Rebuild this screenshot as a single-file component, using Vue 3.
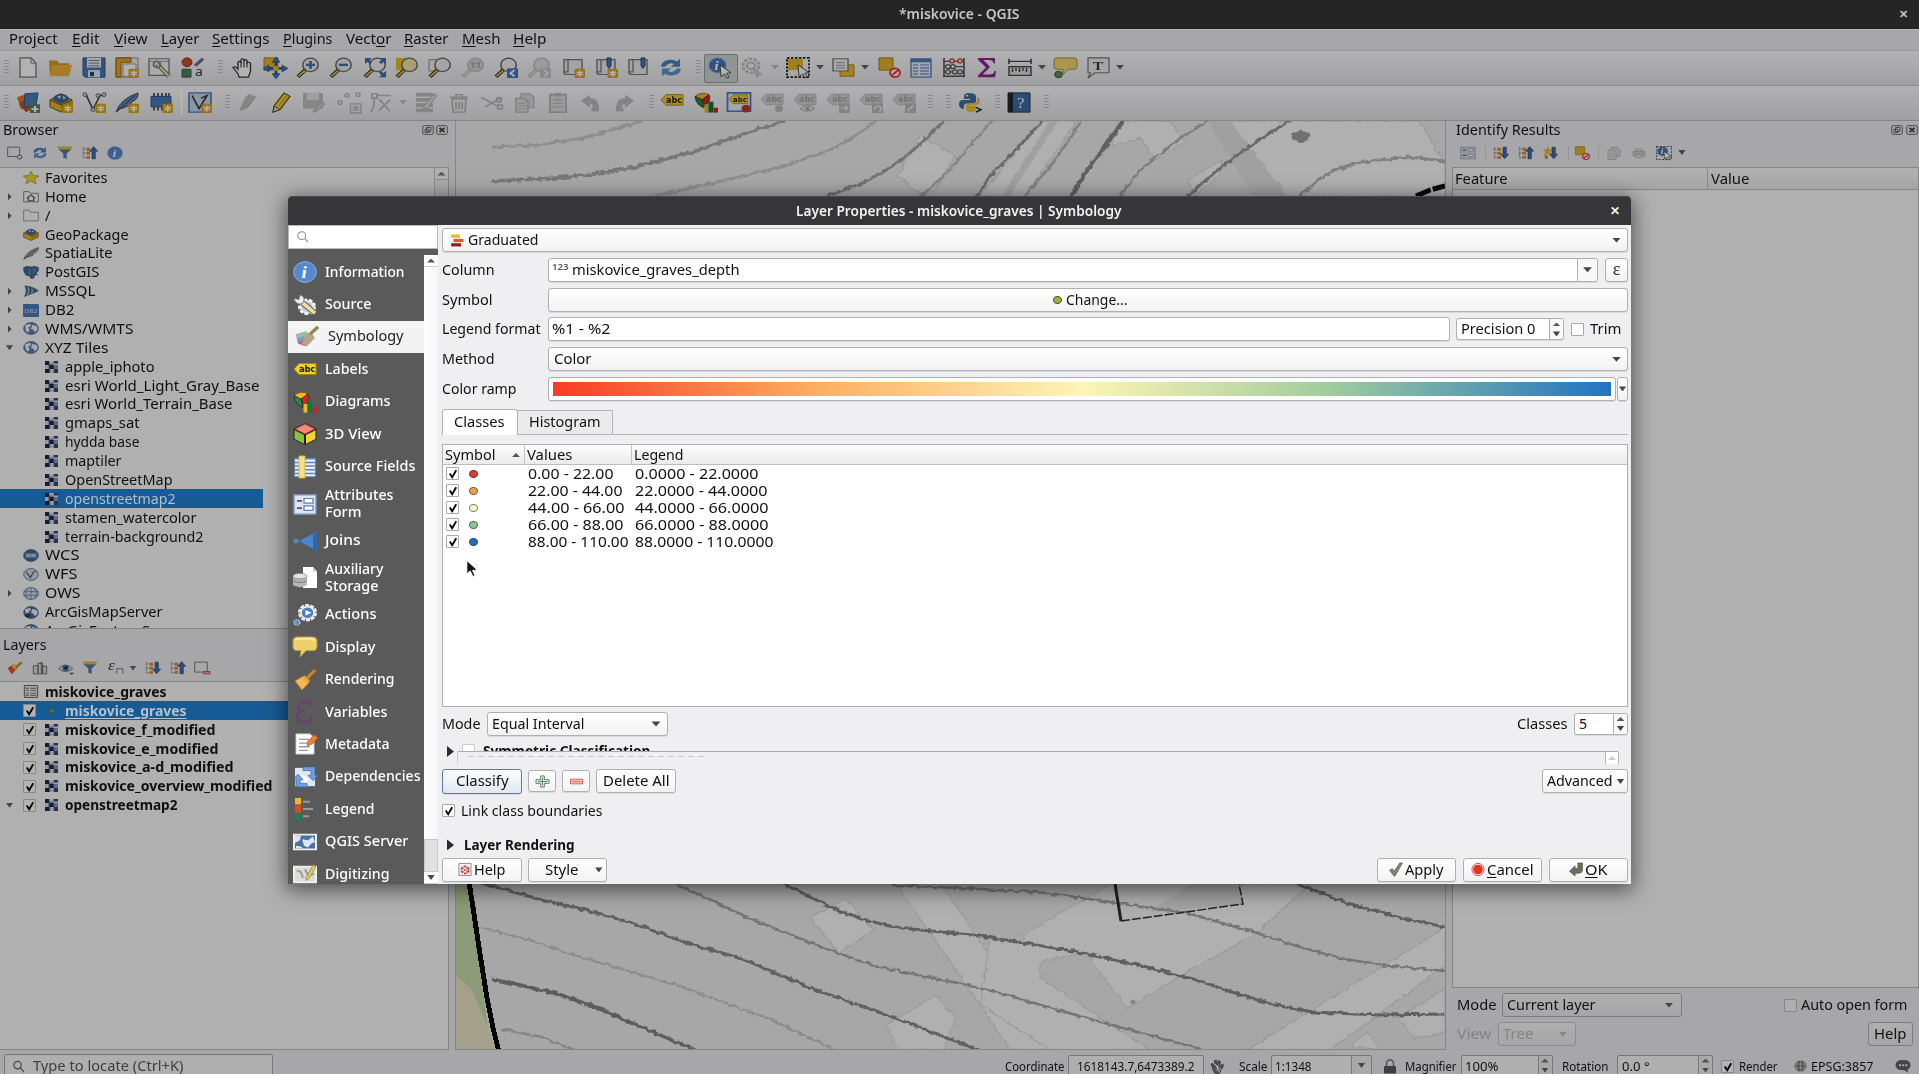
<script setup>
const vFit = {
  mounted(el, { value }) {
    if (!value) return
    const natural = el.getBoundingClientRect().width
    const wanted = value + 1.5
    el.style.transform = `scaleX(${wanted / natural})`
    el.style.marginRight = `${wanted - natural}px`
  },
}

const badge = '<rect x="13.500" y="13.500" width="10.500" height="10.500" rx="1.500" fill="#dca31c"/><path d="M18.800 15v7.500M15.500 17l6.600 3.600M22.100 17l-6.600 3.600" stroke="#fff" stroke-width="1.500"/>'
const lens = (fill, extra = '', c = '#666') => `<path d="M9.500 14.500L2 22.500" stroke="${c === '#666' ? '#333' : '#bdbdbd'}" stroke-width="4"/><path d="M9 15.500L2.500 22" stroke="${c === '#666' ? '#e8c33c' : '#ddd'}" stroke-width="2"/><circle cx="14.500" cy="9" r="7.700" fill="${fill}" stroke="${c}" stroke-width="1.500"/>${extra}`
const tag = (fill, ink) => `<path d="M1 12l5-6h17v12H6z" fill="${fill}" stroke="${ink === '#a5a5a5' ? '#bbb' : '#a08a10'}"/><text x="6" y="15.500" font-size="9.500" font-weight="700" font-family="DejaVu Sans, sans-serif" fill="${ink}" textLength="16" lengthAdjust="spacingAndGlyphs">abc</text>`
const offTag = (extra) => `<g transform="translate(0 -3.500)">${tag('#d4d4d4', '#a5a5a5')}</g>${extra}`
const book = (extra) => `<path d="M3 3h18v17H6q-3 0-3-2z" fill="#e9e9e9" stroke="#777" stroke-width="1.400"/><path d="M7 3v14H3" fill="none" stroke="#777" stroke-width="1.300"/>${extra}`
const globe = (fill, land) => `<circle cx="12" cy="12" r="11" fill="${fill}" stroke="#4c678c" stroke-width="1.300"/>${land}`
const lands = '<path d="M3 6l8-3 1 5-4 2 2 5-3 5-3-5zM14 5l7 3 1 6-4 5-3-5-3-1z" fill="#e7edf5"/>'
const grid3 = '<path d="M1 8.500h22M1 15.500h22M12 1v22M6 2.500q-4 9.500 0 19M18 2.500q4 9.500 0 19" fill="none" stroke="#5c7ea8" stroke-width="1.200"/>'
const info = '<circle cx="12" cy="12" r="11.300" fill="#5688cf" stroke="#8fb3e4"/><text x="8.500" y="19" font-size="19" font-style="italic" font-weight="700" font-family="Liberation Serif, serif" fill="#fff">i</text>'
const refresh = '<path d="M2 11Q3 3 12 3q4 0 6 2l3-3v9h-9l3-3q-5-3-9 3z" fill="#4a80c0"/><path d="M22 13q-1 8-10 8-4 0-6-2l-3 3v-9h9l-3 3q5 3 9-3z" fill="#5f93cf"/>'
const diag = '<path d="M1 5q6-6 14-2l-7 6z" fill="#f0b818" stroke="#5b4a10" stroke-width=".7"/><path d="M1 5l7 4 2 9Q2 15 1 5z" fill="#1f8a50" stroke="#123"  stroke-width=".7"/><path d="M8 9l7-6q3 5-4 14z" fill="#cc2a20" stroke="#411" stroke-width=".7"/><path d="M10.500 14h4v9.500h-4z" fill="#f0b818"/><path d="M14.500 11h5v12.500h-5z" fill="#127346"/><path d="M19.500 18H24v5.500h-4.500z" fill="#c22"/>'
const box = '<path d="M1 9l11-7 11 7v8l-11 6-11-6z" fill="#e5b92e" stroke="#5c4708"/><path d="M12 15l11-6v8l-11 6z" fill="#c99812"/><path d="M4 9a8 7 0 0 1 16 0l-8 5z" fill="#3e6698"/><path d="M8 5l4-1-1 4zM14 4l3 3-3 1z" fill="#dce6f2"/><path d="M1 9l11 6 11-6" fill="none" stroke="#5c4708"/>'
const feather = (c) => `<path d="M1 23Q5 8 23 1q1 7-6 10l-2 4-6 3-4 1z" fill="${c}" stroke="#444"/><path d="M2 22Q10 14 20 4" fill="none" stroke="#333"/>`
const funnel = '<path d="M2 5h20l-7.500 8v9l-5-2v-7z" fill="#4f78ad"/><path d="M1 1h22l-2 5H3z" fill="#e3b93a"/>'
const tree = '<path d="M2 2v18M2 5h7M2 12h7M2 20h7" stroke="#888" stroke-width="1.500" stroke-dasharray="3 1"/><path d="M7 3h5v5H7zM7 10h5v5H7zM7 17h5v5H7z" fill="#e08a2c"/>'
const up = '<path d="M17.500 1l6 8h-3.500v13h-5V9h-3.500z" fill="#3f6da8" stroke="#284a78"/>'
const down = '<path d="M17.500 22l6-8h-3.500V2h-5v12h-3.500z" fill="#3f6da8" stroke="#284a78"/>'
const noSel = '<path d="M2 1h14v14H2z" fill="#e3b52a" stroke="#a57f10"/><circle cx="18" cy="18" r="5" fill="#fbecec" stroke="#d33" stroke-width="1.800"/><path d="M14.800 21l6.500-6" stroke="#d33" stroke-width="1.800"/>'
const arrowCur = '<path d="M12 9l11 9-4.500.6 2.500 4.400-2.200 1-2.300-4.500-3.500 3z" fill="#fff" stroke="#444"/>'

const ic = {
  fnew: '<path d="M4 1h11l5 6v16H4z" fill="#fff" stroke="#777" stroke-width="1.300"/><path d="M15 1v6h5" fill="none" stroke="#777"/>',
  open: '<path d="M1 4h8l2 3h10v14H2z" fill="#d69a24"/><path d="M4 9h20l-3 13H2z" fill="#edb13c"/>',
  save: '<path d="M1 1h22v22H3l-2-2z" fill="#4876b5" stroke="#2f5285"/><path d="M5 1h14v11H5z" fill="#f2f2f2"/><path d="M6.500 4h11M6.500 7h11M6.500 10h11" stroke="#777"/><path d="M6 15h12v8H6z" fill="#dfe7f2"/><path d="M8 17h4v5H8z" fill="#345"/>',
  layout: '<path d="M1 1h22v22H1z" fill="#eee" stroke="#888"/><path d="M1 1h15v5H6v17H1z" fill="#e5a724" stroke="#8f6207"/><path d="M8 8h13v14H8z" fill="#fff" stroke="#999"/>' + badge,
  wrench: '<path d="M1 2h20v19H1z" fill="#f4f4f4" stroke="#777" stroke-width="1.300"/><path d="M1 5h20" stroke="#999"/><path d="M9 8l12 14" stroke="#666" stroke-width="4.500"/><path d="M9 8l12 14" stroke="#ece5a5" stroke-width="2.400"/><circle cx="9" cy="8.500" r="3.500" fill="none" stroke="#888" stroke-width="2"/>',
  style: '<circle cx="6" cy="6" r="5" fill="#c94f2e" stroke="#8a3018"/><path d="M14 10L22 2" stroke="#66708f" stroke-width="3.500"/><path d="M1 14h9v9H1z" fill="#4a8560" stroke="#2c5c3e"/><text x="14" y="22" font-size="14" font-family="Noto Sans, sans-serif" fill="#333">a</text>',
  hand: '<path d="M8 23l-1-4-5-7q2-2 5 2V6q1.500-2 3 0V3q1.500-2 3 0v1q1.500-2 3 0v3q1.500-2 3.500 0v9l-2 7z" fill="#fff" stroke="#333" stroke-width="1.300"/><path d="M10 5v7M13 4v8M16 5v7" stroke="#444" stroke-width="1.200"/>',
  pan: '<path d="M1 1h14v14H1z" fill="#e5b62e" stroke="#a57f10"/><path d="M13 3v20M3 13h20" stroke="#2f5c94" stroke-width="3"/><path d="M13 0l4 6H9zM13 25l4-6H9zM0 13l6-4v8zM25 13l-6-4v8z" fill="#3f72b2" stroke="#234a7c" stroke-width=".6"/><circle cx="13" cy="13" r="3" fill="#e5b62e"/>',
  zin: lens('#e9e9e9', '<path d="M14.500 4.500v9M10 9h9" stroke="#4571ac" stroke-width="2.800"/>'),
  zout: lens('#e9e9e9', '<path d="M10 9h9" stroke="#4571ac" stroke-width="2.800"/>'),
  zfull: lens('#eee') + '<path d="M2 1h7L2 8zM23 1v7l-7-7zM23 23h-7l7-7z" fill="#3f6da8"/><path d="M3 2l5 5M22 2l-5 5M22 22l-5-5" stroke="#3f6da8" stroke-width="3"/>',
  zsel: '<path d="M1 1h11v14H1z" fill="#e8bc26"/>' + lens('#efe7a5'),
  zlay: '<path d="M1 3h11v13H1z" fill="#eee" stroke="#888"/>' + lens('#ececec'),
  zone: lens('#d6d6d6', '<text x="8.500" y="13" font-size="10" font-weight="700" font-family="Noto Sans, sans-serif" fill="#a5a5a5" textLength="12">1:1</text>', '#bdbdbd'),
  zprev: lens('#eee') + '<path d="M13 13h11v11H13z" fill="#4876b5"/><path d="M20.500 15l-4 3.500 4 3.500" fill="none" stroke="#fff" stroke-width="2"/>',
  znext: lens('#ddd', '', '#bdbdbd') + '<path d="M13 13h11v11H13z" fill="#c4c4c4"/><path d="M17 15l4 3.500-4 3.500" fill="none" stroke="#eee" stroke-width="2"/>',
  bm1: book(badge), bm2: book('<path d="M13 1h4v9l-2 3-2-3z" fill="#4876b5" stroke="#26466f"/>' + badge), bm3: book('<path d="M15 1h4v9l-2 3-2-3z" fill="#4876b5" stroke="#26466f"/>'),
  refresh, info, box, funnel,
  ident: '<circle cx="9.500" cy="9.500" r="8.500" fill="#4876b5" stroke="#7ea0d0"/><text x="6.500" y="15" font-size="15" font-style="italic" font-weight="700" font-family="Liberation Serif, serif" fill="#fff">i</text>' + arrowCur,
  identsel: '<path d="M1 1h22v22H1z" fill="none" stroke="#555" stroke-width="1.600" stroke-dasharray="3 2"/><circle cx="10" cy="9" r="8" fill="#4876b5"/><text x="7" y="14" font-size="14" font-style="italic" font-weight="700" font-family="Liberation Serif, serif" fill="#fff">i</text>' + arrowCur,
  action: '<circle cx="11" cy="10" r="8" fill="none" stroke="#bfbfbf" stroke-width="3" stroke-dasharray="3.500 1.500"/><circle cx="11" cy="10" r="4" fill="none" stroke="#bfbfbf" stroke-width="2"/><path d="M13 12l9 8-4 1-1 3z" fill="#ccc" stroke="#bbb"/>',
  select: '<path d="M2 2h15v13H2z" fill="#e5b62e"/><path d="M1 1h22v22H1z" fill="none" stroke="#222" stroke-width="1.800" stroke-dasharray="2.500 1.500"/>' + arrowCur,
  layers2: '<path d="M9 9h14v13H9z" fill="#e9bc2c" stroke="#a8800c"/><path d="M2 2h15v14H2z" fill="#eee" stroke="#777" stroke-width="1.400"/><path d="M5 6.500h9M5 9.500h9M5 12.500h9" stroke="#999"/>',
  desel: noSel,
  table: '<path d="M2 2h20v21H2z" fill="#e6edf8" stroke="#5b80b8" stroke-width="1.400"/><path d="M2 2h20v4H2z" fill="#4f79b8"/><path d="M4 9h5M11 9h9M4 12.500h5M11 12.500h9M4 16h5M11 16h9M4 19.500h5M11 19.500h9" stroke="#7a9bcc" stroke-width="1.600"/>',
  abacus: '<path d="M2 1v22M22 1v22M1 22h22M2 5h20M2 11h20M2 17h20" stroke="#555" stroke-width="1.600" fill="none"/><g fill="#f5dede" stroke="#c03a3a" stroke-width="1.300"><circle cx="10" cy="4.500" r="2.300"/><circle cx="18" cy="4.500" r="2.300"/></g><g fill="#eee" stroke="#555" stroke-width="1.300"><circle cx="6" cy="11" r="2.300"/><circle cx="11" cy="11" r="2.300"/><circle cx="6" cy="17" r="2.300"/><circle cx="13" cy="17" r="2.300"/><circle cx="18" cy="17" r="2.300"/></g>',
  sigma: '<path d="M3 1h17v6h-1.500Q18 3.500 14 3.500H8.500l6.500 8-7.500 8.500H15q4 0 4.500-4H21l-1 7H3v-2l8-9-8-9z" fill="#8d2390"/>',
  ruler: '<path d="M1 5h22M1 2v6M23 2v6" stroke="#444" stroke-width="1.600"/><path d="M1 11h22v10H1z" fill="#ddd" stroke="#444" stroke-width="1.400"/><path d="M4.500 12v5M8 12v4M11.500 12v5M15 12v4M18.500 12v5" stroke="#444" stroke-width="1.400"/>',
  tip: '<path d="M4 1h17q3 0 3 3v7q0 3-3 3h-6l-5 6v-6H4q-3 0-3-3V4q0-3 3-3z" fill="#eed873" stroke="#a48d2a"/><circle cx="5.500" cy="20" r="3.800" fill="#5f8f62" stroke="#345d38"/>',
  annot: '<path d="M2 1h21v17H9l-7 6 2.500-6H2z" fill="#ededed" stroke="#777" stroke-width="1.200"/><text x="7" y="15" font-size="15" font-weight="700" font-family="Liberation Serif, serif" fill="#333">T</text>',
  dsm: '<path d="M1 6l10-4 5 14-11 4z" fill="#d87a28"/><path d="M3 14l9-9 8 12-10 6z" fill="#c5502a"/><path d="M9 2l13-1-2 15-12 1z" fill="#4a7dbe" stroke="#2c5288"/><path d="M14 14h10v10H14z" fill="#5d7b62"/><path d="M19 16v7M15.500 19.500h7" stroke="#fff" stroke-width="2"/>',
  gpkg: box + badge, vnew: '<path d="M4 3l7 17L18 4h5" fill="none" stroke="#444" stroke-width="1.600"/><g fill="#eee" stroke="#444"><circle cx="3" cy="3" r="2"/><circle cx="11" cy="20" r="2"/><circle cx="16" cy="4" r="2"/><circle cx="22" cy="3" r="2"/></g>' + badge,
  feath: feather('#5f89bd') + badge,
  chip: '<path d="M2 5h20v12H2z" fill="#4a7ab8" stroke="#2d5286"/><path d="M5 1v4M9 1v4M13 1v4M17 1v4M20 1v4M5 17v4M9 17v4M13 17v4" stroke="#333" stroke-width="1.500"/>' + badge,
  mesh: '<path d="M1 1h22v22H1z" fill="#c7d8ee" stroke="#4c78b2" stroke-width="1.600"/><path d="M4 4l7 15L19 4l-6 3" fill="none" stroke="#333" stroke-width="1.600"/>' + badge,
  pens: '<path d="M3 22L9 6l4-4 4 2 4 1-9 13z" fill="#c2c2c2"/><path d="M5 20L14 5M9 20l9-14" stroke="#aaa"/>',
  pencil: '<path d="M5 16L15 1l6 4-10 15-7 3z" fill="#f2cf39" stroke="#5d4c08" stroke-width="1.200"/><path d="M5 16l6 4-7 3z" fill="#e9d9b0" stroke="#444"/><path d="M10 16L18 4" stroke="#a88a12"/>',
  saveg: '<path d="M1 1h20v18H1z" fill="#c0c0c0"/><path d="M5 1h12v8H5z" fill="#e4e4e4"/><path d="M12 20l8-9 3 3-8 8-4 1z" fill="#ccc" stroke="#aaa"/>',
  dots: '<g fill="none" stroke="#bbb" stroke-width="1.500"><circle cx="10" cy="4" r="2"/><circle cx="21" cy="3" r="2"/><circle cx="3" cy="12" r="2"/><path d="M13.500 13.500H24V24H13.500zM18.700 15v7M15.500 17l6.500 4M22 17l-6.500 4"/></g>',
  vert: '<path d="M3 2h5v5H3zM8 4h14M5 7Q6 16 2 23M10 8l11 14M21 9L10 21" fill="none" stroke="#bbb" stroke-width="1.800"/>',
  multi: '<path d="M2 3h17M2 9h17M2 15h17M2 21h17" stroke="#bdbdbd" stroke-width="4.500"/><path d="M9 18L20 2l3 2-10 15z" fill="#ddd" stroke="#aaa"/>',
  trash: '<path d="M3 6h18M9 6V3h6v3M5 8h14l-1 15H6zM9 11v9M12 11v9M15 11v9" fill="none" stroke="#b5b5b5" stroke-width="1.700"/>',
  cut: '<path d="M1 6l18 11M5 17L22 6" stroke="#bbb" stroke-width="2"/><circle cx="20" cy="17" r="2.600" fill="none" stroke="#bbb" stroke-width="1.800"/><circle cx="19" cy="9" r="2.600" fill="none" stroke="#bbb" stroke-width="1.800"/>',
  copy: '<path d="M8 2h9l4 4v12H8z" fill="#d9d9d9" stroke="#bbb" stroke-width="1.400"/><path d="M3 7h8l4 4v12H3z" fill="#ddd" stroke="#b5b5b5" stroke-width="1.400"/><path d="M5 13h7M5 16h8M5 19h8" stroke="#bbb"/>',
  paste: '<path d="M4 3h16v20H4z" fill="#ddd" stroke="#b5b5b5" stroke-width="1.800"/><path d="M9 1h6v4H9z" fill="#bbb"/><path d="M7 9h10M7 13h10M7 17h10" stroke="#bbb" stroke-width="1.300"/>',
  undo: '<path d="M2 10l9-7v4q10 0 9 15-8 1-8-1 4-8-1-7v4z" fill="#bdbdbd"/>',
  redo: '<path d="M22 10l-9-7v4Q3 7 4 22q8 1 8-1-4-8 1-7v4z" fill="#bdbdbd"/>',
  tag: tag('#f2cd2e', '#222'), tagup: '<g transform="translate(0 -3)">' + tag('#f2cd2e', '#222') + '</g>', diag,
  tag2: '<path d="M.500 1h23v21H.500z" fill="#e8eef8" stroke="#4a78c8" stroke-width="1.800"/><g transform="translate(1 -2) scale(.85)">' + tag('#f2cd2e', '#222') + '</g><circle cx="19" cy="19" r="4.500" fill="#c5302a"/>',
  t3: offTag('<circle cx="19" cy="19" r="4" fill="#bbb"/>'),
  t4: offTag('<path d="M7 19q7-7 15 0-8 6-15 0z" fill="#ddd" stroke="#aaa"/><circle cx="14.500" cy="19" r="2" fill="#aaa"/>'),
  t5: offTag('<path d="M13 13h11v11H13z" fill="#bbb"/><path d="M15 18.500h7M19 16l3 2.500-3 2.500" stroke="#eee" fill="none" stroke-width="1.500"/>'),
  t6: offTag('<path d="M13 13h11v11H13z" fill="#bbb"/><path d="M16 20a3 3 0 1 1 4 2" stroke="#eee" fill="none" stroke-width="1.500"/>'),
  t7: offTag('<path d="M13 13h11v11H13z" fill="#bbb"/><path d="M15.500 21.500l6-6" stroke="#eee" stroke-width="1.800"/>'),
  python: '<path d="M11 1Q6 1 6 5v3h6v1H4q-3 1-3 5t3 5h2v-3q0-3 3-3h6q3 0 3-3V5q0-4-7-4z" fill="#3f6f9f"/><path d="M13 23q5 0 5-4v-3h-6v-1h6q4-1 4-4.500T20 6h-1v4q0 3-3 3h-5q-3 0-3 3v3q0 4 5 4z" fill="#efc332"/><circle cx="9" cy="4" r="1" fill="#fff"/><path d="M18 17.500l5 2.700-5 2.700" fill="none" stroke="#224" stroke-width="1.600"/>',
  help: '<path d="M1 1h22v22H1z" fill="#3f6da8" stroke="#233"/><path d="M1 1h5v22H1z" fill="#1d2633"/><text x="10" y="18" font-size="17" font-family="Liberation Serif, serif" fill="#fff">?</text>',
  // panel buttons
  addsel: '<path d="M1 2h18v16H1z" fill="#eee" stroke="#777" stroke-width="1.500"/><circle cx="19" cy="19" r="3.500" fill="#dfe7df" stroke="#666" stroke-width="1.500"/>',
  collapse: tree + up, expand: tree + down,
  exnew: '<path d="M9 0l2 6 6 0-5 4 2 7-5-4-6 4 2-7-4-4h6z" fill="#eeb62c"/><path d="M4 16h5v6H4z" fill="#e08a2c"/>' + down,
  brush: '<path d="M1 12l8-6 5 8-7 9z" fill="#d9542b"/><path d="M6 8l5-3 6 7-4 4z" fill="#eec441"/><path d="M13 11l9-9" stroke="#b98930" stroke-width="3.500"/>',
  addgrp: '<path d="M2 8h7v14H2zM9 4h7v18H9zM16 9h6v13h-6z" fill="#ddd" stroke="#666" stroke-width="1.500"/><path d="M14 1v20" stroke="#666" stroke-width="1.500"/>',
  eye: '<path d="M1 13q10-12 21 0-11 10-21 0z" fill="#eee" stroke="#666" stroke-width="1.500"/><circle cx="11.500" cy="12" r="5" fill="#3f6da8"/><circle cx="11.500" cy="12" r="2" fill="#112"/><path d="M17 20h7l-3.500 4z" fill="#555"/>',
  eps: '<text x="0" y="16" font-size="26" font-style="italic" font-family="Liberation Serif, serif" fill="#333">ε</text><path d="M13 22v-9h9v9" fill="none" stroke="#999" stroke-width="2"/>',
  remove: '<path d="M1 2h19v17H1z" fill="#eee" stroke="#777" stroke-width="1.500"/><path d="M14 18h10v4H14z" fill="#f0b0a8" stroke="#c33" stroke-width="1.300"/>',
  form: '<path d="M1 2h22v20H1z" fill="#d5dae2" stroke="#8490a3"/><path d="M4 7h5M4 16h5" stroke="#667" stroke-width="2"/><path d="M12 5h8v4h-8zM12 14h8v4h-8z" fill="#fff" stroke="#7d93b5"/>',
  print: '<path d="M3 9h18v8H3z" fill="#c8c8c8" stroke="#aaa"/><path d="M7 5h10v4H7zM7 15h10v5H7z" fill="#e5e5e5" stroke="#aaa"/>',
  // browser sources
  star: '<path d="M12 .500l3.500 8 8.500.6-6.500 5.600 2 8.800-7.500-4.800-7.500 4.800 2-8.800L0 9.100l8.500-.6z" fill="#e9cf38" stroke="#8f7d18"/>',
  home: '<path d="M1 3h8l2 3h12v16H1z" fill="none" stroke="#777" stroke-width="1.500"/><path d="M6 15l6-6 6 6M8 14v6h8v-6" fill="none" stroke="#555" stroke-width="1.800"/>',
  folder: '<path d="M1 2h8l2 4h12v16H1z" fill="none" stroke="#8a8a8a" stroke-width="1.400"/>',
  lite: feather('#9aa3ad'),
  pg: '<path d="M1 3Q6-1 12 2q6-3 11 1 2 6-4 11l3 2-5 1q0 7-4 6-3 0-3-6l-4 1Q0 12 1 3z" fill="#3f6996" stroke="#223a55"/><path d="M10 6v9M16 5q3 4-1 8" stroke="#9fb8d4" fill="none"/>',
  ms: '<path d="M2 1Q16 2 24 11 14 17 1 22 7 12 2 1z" fill="#46688f"/><path d="M7 4q4 7-1 15M13 7q3 5-1 9" fill="none" stroke="#cdd8e6" stroke-width="1.500"/>',
  db2: '<rect width="24" height="24" rx="2" fill="#4877b4"/><text x="2" y="16" font-size="10" textLength="20" lengthAdjust="spacingAndGlyphs" font-family="DejaVu Sans, sans-serif" fill="#c4d7ef">DB2</text>',
  wms: globe('#5b7ca6', lands), wcs: globe('#3f5f8a', '<g opacity=".9"><path d="M4 8h16v8H4z" fill="#c5d2e4"/></g>' + grid3), wfs: globe('#cdd4dd', '<path d="M5 7l6 11 5-11h4" fill="none" stroke="#555" stroke-width="1.800"/>'),
  ows: globe('#ccd6e3', grid3), arc: globe('#46688f', lands + '<circle cx="7" cy="17" r="4" fill="#29415f"/>'),
  xyz: '<path d="M0 0h24v24H0z" fill="#8794ae"/><path d="M0 0h8v8H0zM8 8h8v8H8zM0 16h8v8H0z" fill="#20263f"/><path d="M16 0h8v8h-8zM8 0h8v5H8z" fill="#dde"/><path d="M16 0h8v5h-8zM16 16h8v8h-8z" fill="#39456e"/><path d="M0 8h6v8H0zM10 16h6v8h-6z" fill="#cfd5e6"/>',
  attr: '<path d="M2 1h20v22H2z" fill="#e5e5e5" stroke="#555" stroke-width="1.500"/><path d="M4 6h5M11 6h9M4 10.500h5M11 10.500h9M4 15h5M11 15h9M4 19h5M11 19h9" stroke="#666" stroke-width="1.600"/>',
  dot: '<circle cx="12" cy="12" r="5" fill="#6f9e4a" stroke="#3b5a66"/>',
  // dialog pages
  src: '<circle cx="14" cy="14" r="7.500" fill="#dfe5ef" stroke="#f4f4f4" stroke-width="3" stroke-dasharray="3.500 1.800"/><circle cx="14" cy="14" r="5.500" fill="#b9c6dc"/><path d="M7 7l15 14" stroke="#66604a" stroke-width="6"/><path d="M8 8l14 13" stroke="#ecdf9c" stroke-width="4"/><path d="M1 5l5 1 1-5q4 1 4 5l-1 4-4 1Q2 10 1 5z" fill="#eee" stroke="#777" stroke-width=".8"/>',
  symb: '<path d="M1 9l10-3 7 8-8 8-7-3z" fill="#c95f74"/><path d="M1 9l10-3 3 3-11 5z" fill="#8fc4a4"/><path d="M2 14l11-5 2 3-12 6z" fill="#6da4d0"/><path d="M10 9l6-2 4 6-8 9-5-2z" fill="#b6a582"/><path d="M15 9l8-8" stroke="#8d8b4c" stroke-width="3.500"/>',
  cube: '<path d="M12 0l11.500 6v12L12 24 .500 18V6z" fill="#222"/><path d="M12 1l10 5.500-10 5.500L2 6.500z" fill="#f58b80" stroke="#b33"/><path d="M1.500 8L11 13v9.500L1.500 17.500z" fill="#86c440"/><path d="M22.500 8L13 13v9.500l9.500-5z" fill="#f2d233"/>',
  fields: '<path d="M1 2h22v21H1z" fill="#5c84bb"/><path d="M2 5h20M2 9h20M2 13h20M2 17h20M2 21h20" stroke="#e9f0fa" stroke-width="2.400"/><path d="M6 0h6v24H6z" fill="#f7df87" stroke="#d2b64e"/>',
  aform: '<path d="M1 2h22v21H1z" fill="#dbe5f3" stroke="#7b97c2" stroke-width="1.400"/><path d="M4 8.500h5M4 16.500h5" stroke="#555" stroke-width="2"/><path d="M11 6h9v5h-9zM11 14h9v5h-9z" fill="#fff" stroke="#5f82b5" stroke-width="1.300"/>',
  joins: '<circle cx="3" cy="12" r="2.700" fill="#4f86c6"/><path d="M6 12L24 2v21z" fill="#4a86cc"/><path d="M20 4l4-2v21l-4-2z" fill="#2f67ad"/>',
  aux: '<path d="M10 0h10l4 5v18H10z" fill="#fff"/><path d="M20 0v5h4" fill="#ccc"/><path d="M0 10v10q7 4 14 0V10z" fill="#b5b5b5"/><path d="M0 15q7 4 14 0" fill="none" stroke="#777"/><ellipse cx="7" cy="10" rx="7" ry="3" fill="#e3e3e3" stroke="#888" stroke-width=".8"/>',
  actions: '<circle cx="14.500" cy="9.500" r="7.800" fill="none" stroke="#ececec" stroke-width="3.500" stroke-dasharray="3.800 1.100"/><circle cx="14.500" cy="9.500" r="6.600" fill="#4b80c3" stroke="#e4e8f0" stroke-width="1.800"/><path d="M12.500 6.500l6 3-6 3z" fill="#fff"/><circle cx="4" cy="20" r="3" fill="#5b8ccb" stroke="#9cc" stroke-width="1.500" stroke-dasharray="2 1"/>',
  display: '<path d="M4 1h16q4 0 4 4v7q0 4-4 4h-7l-6 7 1-7H4q-4 0-4-4V5q0-4 4-4z" fill="#ecd06c" stroke="#b49a3c"/><path d="M3 5q0-2 3-2h13q2 0 2 3" stroke="#f8eab0" stroke-width="2" fill="none"/>',
  render: '<path d="M2 13l8-5 6 7-7 8z" fill="#f3b85e" stroke="#b87624"/><path d="M9 9l3-2 5 6-3 3z" fill="#e7a544"/><path d="M14 10l8-9" stroke="#d08420" stroke-width="3.200"/>',
  vars: '<path d="M18 5Q16 1 11 1 5 2 5 6t6 5Q4 12 4 17q1 6 8 6 6 0 7-6M18 5v-2" fill="none" stroke="#6d3b75" stroke-width="2.300"/>',
  meta: '<path d="M3 1h14l4 4v18H3z" fill="#fff" stroke="#ccc"/><path d="M6 7h10M6 11h11M6 15h11M6 19h9" stroke="#999" stroke-width="1.500"/><path d="M14 14l1-5 6-7 4 3-6 7z" fill="#f0803a" stroke="#b04a15" stroke-width=".7"/>',
  deps: '<path d="M2 2h20v20H2z" fill="#dfe7f3"/><path d="M10 1h12v9h3l-5 6-5-6h3V5h-8z" fill="#6f9fdd" stroke="#2f5f9f" stroke-width=".7"/><path d="M14 23H3v-8H0l5-6 5 6H7v4h7z" fill="#6f9fdd" stroke="#2f5f9f" stroke-width=".7"/><path d="M8 9l8 5-4 5z" fill="#fff"/>',
  legend: '<path d="M2 0h6v7H2z" fill="#f5b31f"/><path d="M2 8h6v8H2z" fill="#dd4d1c"/><path d="M2 17h6v7H2z" fill="#158251"/><path d="M10 4h7M10 12h10M10 20h6" stroke="#9a9a9a" stroke-width="2.200"/>',
  server: '<path d="M1 4h22v16H1z" fill="#49709f" stroke="#eee" stroke-width="2"/><path d="M2 5h6l-1 5-5 3zM9 9l6 1 5-4 2 6-4 2-3 4-4-2zM3 16l5 1 2 2H3z" fill="#dbe6f6"/>',
  digit: '<path d="M1 4h22v17H1z" fill="#dcdcd4" stroke="#efefef" stroke-width="2"/><path d="M4 8l4 2 2 6M12 7l3 6 6-1" stroke="#999" fill="none" stroke-width="2"/><path d="M13 16l7-14 3 2-7 13-3 2z" fill="#dfc46c" stroke="#917d3c" stroke-width=".7"/>',
  grad: '<path d="M2 1h15v6H2z" fill="#f6b12a"/><path d="M6 9h17v6H6z" fill="#e4572a"/><path d="M2 17h17v6H2z" fill="#8e1e16"/>',
  float: '<rect x="1.500" y="1.500" width="21" height="21" rx="3" fill="none" stroke="#444" stroke-width="2"/><path d="M9 6h9v9H9zM6 10h8v8H6z" fill="none" stroke="#444" stroke-width="2"/>',
  close: '<rect x="1.500" y="1.500" width="21" height="21" rx="3" fill="none" stroke="#444" stroke-width="2"/><path d="M7 7l10 10M17 7L7 17" stroke="#333" stroke-width="4"/>',
}

const spaced = (widths, base) => (list) => {
  let end = 0
  return list.map(([n, c]) => {
    const w = widths[n] || base
    const ml = c - w / 2 - end
    end = c + w / 2
    return { n, style: { marginLeft: ml + 'px' } }
  })
}
const place = spaced({ arr: 11, grip: 5, sep: 1 }, 24)
const placeSmall = spaced({ arr: 9, sep: 1 }, 16)
const bar1 = place([['grip', 6], ['fnew', 28], ['open', 60], ['save', 94], ['layout', 127], ['wrench', 160], ['style', 193], ['grip', 220], ['hand', 243], ['pan', 275], ['zin', 308], ['zout', 341], ['zfull', 375], ['zsel', 407], ['zlay', 440], ['zone', 473], ['zprev', 506], ['znext', 539], ['bm1', 573], ['bm2', 606], ['bm3', 638], ['refresh', 671], ['grip', 698], ['ident', 720], ['action', 752], ['arr', 775], ['select', 798], ['arr', 820], ['layers2', 843], ['arr', 865], ['desel', 889], ['table', 921], ['abacus', 954], ['sigma', 987], ['ruler', 1020], ['arr', 1042], ['tip', 1065], ['annot', 1098], ['arr', 1120]])
const bar2 = place([['grip', 6], ['dsm', 28], ['gpkg', 61], ['vnew', 94], ['feath', 127], ['chip', 161], ['sep', 181], ['mesh', 200], ['grip', 227], ['pens', 248], ['pencil', 281], ['saveg', 314], ['dots', 349], ['vert', 381], ['arr', 403], ['multi', 426], ['trash', 459], ['cut', 492], ['copy', 525], ['paste', 558], ['undo', 591], ['redo', 624], ['grip', 651], ['tagup', 672], ['diag', 706], ['tag2', 739], ['t3', 772], ['t4', 805], ['t5', 838], ['t6', 871], ['t7', 904], ['grip', 930], ['grip', 948], ['python', 970], ['grip', 997], ['help', 1019], ['grip', 1046]])
const barB = placeSmall([['addsel', 15], ['refresh', 40], ['funnel', 65], ['collapse', 90], ['info', 115]])
const barL = placeSmall([['brush', 15], ['addgrp', 40], ['eye', 66], ['funnel', 90], ['eps', 116], ['arr', 133], ['expand', 153], ['collapse', 178], ['remove', 202]])
const barI = placeSmall([['form', 18], ['sep', 35], ['expand', 51], ['collapse', 76], ['exnew', 100], ['sep', 118], ['desel', 132], ['sep', 148], ['copy', 164], ['print', 189], ['identsel', 214], ['arr', 232]])

// label pieces: before, mnemonic, after, width, x
const menus = [['Pro', 'j', 'ect', 47, 10], ['', 'E', 'dit', 26, 73], ['', 'V', 'iew', 32, 115], ['', 'L', 'ayer', 37, 162], ['', 'S', 'ettings', 56, 213], ['', 'P', 'lugins', 48, 284], ['Vect', 'o', 'r', 44, 347], ['', 'R', 'aster', 43, 405], ['', 'M', 'esh', 37, 463], ['', 'H', 'elp', 32, 514]]
  .map((m, i, a) => ({ m, style: { marginLeft: (i ? m[4] - a[i - 1][4] - a[i - 1][3] - 1.5 : m[4] - 1) + 'px' } }))

const browser = [
  ['Favorites', 'star', '', 0, 61], ['Home', 'home', 'r', 0, 40], ['/', 'folder', 'r', 0, 4], ['GeoPackage', 'box', '', 0, 82], ['SpatiaLite', 'lite', '', 0, 66], ['PostGIS', 'pg', '', 0, 53], ['MSSQL', 'ms', 'r', 0, 49], ['DB2', 'db2', 'r', 0, 28], ['WMS/WMTS', 'wms', 'r', 0, 87], ['XYZ Tiles', 'wms', 'd', 0, 62],
  ['apple_iphoto', 'xyz', '', 1, 88], ['esri World_Light_Gray_Base', 'xyz', '', 1, 193], ['esri World_Terrain_Base', 'xyz', '', 1, 166], ['gmaps_sat', 'xyz', '', 1, 73], ['hydda base', 'xyz', '', 1, 73], ['maptiler', 'xyz', '', 1, 55], ['OpenStreetMap', 'xyz', '', 1, 106], ['openstreetmap2', 'xyz', '', 1, 109, true], ['stamen_watercolor', 'xyz', '', 1, 130], ['terrain-background2', 'xyz', '', 1, 137],
  ['WCS', 'wcs', '', 0, 33], ['WFS', 'wfs', '', 0, 31], ['OWS', 'ows', 'r', 0, 34], ['ArcGisMapServer', 'arc', '', 0, 116], ['ArcGisFeatureServer', 'arc', '', 0, 140],
]
const layers = [['miskovice_graves', 'dot', 120, true], ['miskovice_f_modified', 'xyz', 149], ['miskovice_e_modified', 'xyz', 152], ['miskovice_a-d_modified', 'xyz', 167], ['miskovice_overview_modified', 'xyz', 206], ['openstreetmap2', 'xyz', 111]]

const pages = [
  ['info', [['Information', 78]]], ['src', [['Source', 45]]], ['symb', [['Symbology', 74]], true], ['tag', [['Labels', 42]]], ['diag', [['Diagrams', 64]]], ['cube', [['3D View', 55]]], ['fields', [['Source Fields', 89]]], ['aform', [['Attributes', 67], ['Form', 35]]], ['joins', [['Joins', 34]]], ['aux', [['Auxiliary', 57], ['Storage', 52]]], ['actions', [['Actions', 50]]], ['display', [['Display', 49]]], ['render', [['Rendering', 68]]], ['vars', [['Variables', 61]]], ['meta', [['Metadata', 63]]], ['deps', [['Dependencies', 94]]], ['legend', [['Legend', 48]]], ['server', [['QGIS Server', 82]]], ['digit', [['Digitizing', 63]]],
]
const classes = [['#dd3b33', '0.00 - 22.00', 84, '0.0000 - 22.0000', 122], ['#f0a04c', '22.00 - 44.00', 93, '22.0000 - 44.0000', 131], ['#fbf8c6', '44.00 - 66.00', 95, '44.0000 - 66.0000', 132], ['#93c493', '66.00 - 88.00', 94, '66.0000 - 88.0000', 132], ['#2b6cb8', '88.00 - 110.00', 99, '88.0000 - 110.0000', 137]]

// contour lines: [points, stroke, width]
const contours = [
  ['492,147 538,145 583,138 612,130 642,121', '#8d8d8d', 3], ['492,181 557,178 600,173 635,167 700,150 746,133 785,121', '#777', 3.5], ['655,196 726,180 778,168 830,150 855,136 876,121', '#8d8d8d', 3], ['827,196 860,184 882,173 905,157 925,140 944,121', '#727272', 3], ['921,196 940,180 954,165 975,140 992,121', '#858585', 2.5], ['977,196 990,176 1006,160 1025,140 1042,121', '#6b6b6b', 3], ['1025,196 1040,178 1055,160 1070,138 1081,121', '#808080', 2.5], ['1071,196 1084,175 1097,157 1112,137 1123,121', '#606060', 4], ['1120,196 1138,172 1156,157 1180,138 1208,121', '#7d7d7d', 2.5], ['1188,196 1215,172 1240,153 1265,136 1289,121', '#6b6b6b', 3], ['1299,196 1315,183 1331,172 1350,165 1370,161 1409,157 1445,161', '#808080', 3],
  ['478,882 542,900 590,911 638,925 690,944 740,958 816,990 893,1017 979,1050', '#616161', 3], ['481,928 530,940 574,955 676,985 772,1020 835,1050', '#8b8b8b', 2], ['491,979 520,985 561,995 595,1007 625,1020 695,1050', '#5c5c5c', 3.5], ['501,1029 542,1037 574,1050', '#858585', 2.5], ['676,884 700,895 746,917 816,945 874,966 957,983 1000,993 1047,1007 1130,1030 1200,1049', '#757575', 2.5], ['784,884 835,909 862,919 893,927 980,936 1073,951 1147,967 1193,979 1247,997 1280,1006 1313,1012 1380,1015 1445,1014', '#5f5f5f', 3], ['893,885 980,889 1047,893 1117,903 1150,908 1187,913 1257,933 1300,947 1340,958 1380,965 1445,971', '#747474', 2.5], ['1297,884 1347,903 1397,917 1445,927', '#5f5f5f', 3],
]
const fields = [
  '920,134 954,156 935,190 920,194 898,176', '1042,121 1077,121 1025,196 980,196', '1118,121 1170,121 1185,142 1156,160 1140,138 1112,146', '1222,121 1420,121 1445,165 1445,196 1272,196 1240,160', '1188,180 1222,160 1220,175 1195,195',
  '845,898 874,930 839,953 810,918', '936,995 955,1017 944,1050 899,1050 886,1025', '896,884 941,884 990,955 1035,1000 1150,1050 1010,1050 963,980', '1110,884 1310,884 1257,933 1187,972 1127,1009 1086,953 1024,944 1024,934 1087,898', '1247,1050 1445,928 1445,966 1330,1050', '1398,1018 1420,1005 1445,988 1445,1032 1415,1039', '1350,1046 1368,1032 1380,1050', '980,1004 1050,1050 1150,1050 1040,978 1040,962 1085,952 990,938',
]
</script>

<template>
  <div class="app">
    <header class="title"><span class="t" v-fit="119">*miskovice - QGIS</span><b class="x">✕</b></header>
    <nav class="menu"><span v-for="i in menus" :key="i.m[4]" class="cell" :style="i.style"><span class="t" v-fit="i.m[3]">{{ i.m[0] }}<u>{{ i.m[1] }}</u>{{ i.m[2] }}</span></span></nav>
    <div v-for="(bar, k) in [bar1, bar2]" :key="k" class="tools">
      <template v-for="(i, j) in bar" :key="j">
        <i v-if="['arr', 'grip', 'sep'].includes(i.n)" :class="[i.n, { faded: i.n === 'arr' && (k === 1 || j === 25) }]" :style="i.style"></i>
        <span v-else class="tool" :class="{ on: i.n === 'ident' }" :style="i.style"><svg viewBox="0 0 24 24" preserveAspectRatio="none" fill="none" v-html="ic[i.n]"></svg></span>
      </template>
    </div>

    <main class="main">
      <section class="left">
        <div class="phead"><span class="t" v-fit="54">Browser</span><svg class="pb" viewBox="0 0 24 24" preserveAspectRatio="none" v-html="ic.float"></svg><svg class="pb" viewBox="0 0 24 24" preserveAspectRatio="none" v-html="ic.close"></svg></div>
        <div class="ptools">
          <svg v-for="(i, j) in barB" :key="j" class="si" :style="i.style" viewBox="0 0 24 24" preserveAspectRatio="none" v-html="ic[i.n]"></svg>
        </div>
        <div class="tree browser">
          <div class="rows">
            <div v-for="r in browser" :key="r[0]" class="row" :class="{ child: r[3], sel: r[5] }">
              <span class="tw"><i v-if="r[2]" :class="r[2] === 'r' ? 'right' : 'arr sm'"></i></span>
              <svg class="ni" viewBox="0 0 24 24" preserveAspectRatio="none" v-html="ic[r[1]]"></svg>
              <span class="t" v-fit="r[4]">{{ r[0] }}</span>
            </div>
          </div>
          <div class="vsb"><span><i class="upa"></i></span></div>
        </div>
        <div class="split"></div>
        <div class="phead lay"><span class="t" v-fit="42">Layers</span></div>
        <div class="ptools lt">
          <template v-for="(i, j) in barL" :key="j">
            <i v-if="i.n === 'arr'" class="arr sm" :style="i.style"></i>
            <svg v-else class="si" :style="i.style" viewBox="0 0 24 24" preserveAspectRatio="none" v-html="ic[i.n]"></svg>
          </template>
        </div>
        <div class="tree layers">
          <div class="rows">
            <div class="row"><span class="tw"></span><svg class="ni" viewBox="0 0 24 24" preserveAspectRatio="none" v-html="ic.attr"></svg><span class="t" v-fit="120">miskovice_graves</span></div>
            <div v-for="r in layers" :key="r[1] + r[0]" class="row" :class="{ full: r[3] }">
              <span class="tw"><i v-if="r[0] === 'openstreetmap2'" class="arr sm"></i></span>
              <span class="cb"><svg viewBox="0 0 13 13"><path d="M3 6l2.600 4L10 2.500" /></svg></span>
              <svg class="ni nx" viewBox="0 0 24 24" preserveAspectRatio="none" v-html="ic[r[1]]"></svg>
              <span class="t" v-fit="r[2]">{{ r[0] }}</span>
            </div>
          </div>
        </div>
      </section>

      <section class="map">
        <svg viewBox="456 121 990 929" width="990" height="929">
          <defs><filter id="rough" x="-2%" y="-2%" width="104%" height="104%"><feTurbulence type="fractalNoise" baseFrequency=".18" numOctaves="2" seed="4" /><feDisplacementMap in="SourceGraphic" scale="5" xChannelSelector="R" yChannelSelector="G" /></filter></defs>
          <path d="M456 884h13l19 145-32-46z" fill="#8c9a78" /><path d="M456 975l16 15 16 37 9 25h-41z" fill="#a5a08c" />
          <g filter="url(#rough)"><polygon v-for="f in fields" :key="f" :points="f" fill="#b0b0b0" stroke="#999a9a" stroke-width="1.200" />
          <path d="M1208 121h22l58 75h-35z M1050 121h8l-48 75h-8z" fill="#a0a0a1" /></g>
          <path d="M1115 884l6 37 122-17-4-20z" fill="#adadad" /><path d="M1150 912l40-28h49l4 20z" fill="#a2a2a3" />
          <g fill="none" filter="url(#rough)"><polyline v-for="c in contours" :key="c[0]" :points="c[0]" :stroke="c[1]" :stroke-width="c[2]" /></g>
          <path d="M469 882l5 32 6 40 7 44 6 30 6 24" fill="none" stroke="#050505" stroke-width="5" shape-rendering="crispEdges" />
          <path d="M1115 884l6 37" stroke="#222" stroke-width="3" /><path d="M1121 921l122-17-4-20" fill="none" stroke="#222" stroke-width="1.500" stroke-dasharray="9 2" />
          <path d="M1416 196l14-6 15-4" fill="none" stroke="#080808" stroke-width="5" stroke-dasharray="16 2" />
          <ellipse cx="1301" cy="136" rx="9.500" ry="6" fill="#707070" filter="url(#rough)" /><circle cx="1133" cy="1002" r="2.500" fill="#858585" />
        </svg>
      </section>

      <section class="ident">
        <div class="phead"><span class="t" v-fit="103">Identify Results</span><svg class="pb" viewBox="0 0 24 24" preserveAspectRatio="none" v-html="ic.float"></svg><svg class="pb" viewBox="0 0 24 24" preserveAspectRatio="none" v-html="ic.close"></svg></div>
        <div class="ptools">
          <template v-for="(i, j) in barI" :key="j">
            <i v-if="i.n === 'arr'" class="arr sm" :style="i.style"></i><i v-else-if="i.n === 'sep'" class="sep" :style="i.style"></i>
            <svg v-else class="si" :style="i.style" viewBox="0 0 24 24" preserveAspectRatio="none" v-html="ic[i.n]"></svg>
          </template>
        </div>
        <div class="results"><div class="rh"><span class="c1"><span class="t" v-fit="51">Feature</span></span><span><span class="t" v-fit="37">Value</span></span></div></div>
        <div class="opt o1"><span class="t" v-fit="38">Mode</span><span class="combo dim m"><span class="t" v-fit="87">Current layer</span><i class="arr"></i></span><span class="cb e"></span><span class="t" v-fit="105">Auto open form</span></div>
        <div class="opt o2"><span class="t off" v-fit="33">View</span><span class="combo dim v"><span class="t off" v-fit="29">Tree</span><i class="arr faded"></i></span><span class="combo dim h"><span class="t" v-fit="31">Help</span></span></div>
      </section>
    </main>

    <footer class="status">
      <span class="loc"><svg viewBox="0 0 14 14"><circle cx="6" cy="5.500" r="4" /><path d="M9 8.500l4 4.500" /></svg><span class="t" v-fit="149">Type to locate (Ctrl+K)</span></span>
      <span class="t s" v-fit="58">Coordinate</span>
      <span class="fld co"><span class="t" v-fit="116">1618143.7,6473389.2</span></span>
      <svg class="ext" viewBox="0 0 24 24"><path d="M8 22L3 9l3-1 3 5-1-9 3-1 2 8 1-7 3 1-1 8 4-4 2 2-5 10-3 3z" fill="#555" stroke="#222" /><path d="M1 3l21 18M9 9l7 12M14 10l-2 9" stroke="#bbb" stroke-width="1.300" /></svg>
      <span class="t s" v-fit="27">Scale</span>
      <span class="fld sc"><span class="t" v-fit="35">1:1348</span><b><i class="arr sm"></i></b></span>
      <svg class="lock" viewBox="0 0 12 15"><path d="M2.500 7V5q0-4 3.500-4t3.500 4v2" fill="none" stroke="#555" stroke-width="1.500" /><rect x="0" y="7" width="12" height="7.500" rx="1" fill="#3f3f3f" /></svg>
      <span class="t s" v-fit="50">Magnifier</span>
      <span class="fld mg"><span class="t" v-fit="32">100%</span><b class="spin"><i class="upa"></i><i class="arr sm"></i></b></span>
      <span class="t s" v-fit="45">Rotation</span>
      <span class="fld ro"><span class="t" v-fit="26">0.0 °</span><b class="spin"><i class="upa"></i><i class="arr sm"></i></b></span>
      <span class="cb"><svg viewBox="0 0 13 13"><path d="M3 6l2.600 4L10 2.500" /></svg></span>
      <span class="t s" v-fit="37">Render</span>
      <svg class="gl" viewBox="0 0 24 24" preserveAspectRatio="none"><circle cx="12" cy="12" r="11" fill="#555" /><path d="M1 8h22M1 16h22M12 1v22M6 2.500q-4 9.500 0 19M18 2.500q4 9.500 0 19" fill="none" stroke="#999" stroke-width="1.200" /></svg>
      <span class="t s" v-fit="61">EPSG:3857</span>
      <svg class="msg" viewBox="0 0 16 14"><path d="M8 1q7.500 0 7.500 5.200 0 3-3 4.600l1 3-4-2.500Q.500 11.500.500 6.200.500 1 8 1z" fill="#454545" /><path d="M4 6.200h2M7.200 6.200h2M10.400 6.200h2" stroke="#aaa" stroke-width="2" /></svg>
    </footer>

    <div class="dialog">
      <div class="dt"><span class="t" v-fit="324">Layer Properties - miskovice_graves | Symbology</span><b class="x">✕</b></div>
      <div class="db">
        <aside class="side">
          <div class="search"><svg viewBox="0 0 14 14"><circle cx="5.500" cy="5.500" r="4.500" /><path d="M9 9l4 4" /></svg></div>
          <div class="sl">
            <div class="pages">
              <div v-for="p in pages" :key="p[0]" class="page" :class="{ cur: p[2], two: p[1].length > 1 }">
                <svg viewBox="0 0 24 24" preserveAspectRatio="none" v-html="ic[p[0]]"></svg>
                <span class="pl"><span v-for="l in p[1]" :key="l[0]" class="t" v-fit="l[1]">{{ l[0] }}</span></span>
              </div>
            </div>
            <div class="sb"><span><i class="upa"></i></span><em></em><span><i class="arr sm"></i></span></div>
          </div>
        </aside>

        <div class="form">
          <div class="combo grad"><svg viewBox="0 0 24 24" preserveAspectRatio="none" v-html="ic.grad"></svg><span class="t" v-fit="69">Graduated</span><i class="arr"></i></div>
          <div class="fr"><label><span class="t" v-fit="51">Column</span></label><div class="inp col"><span class="t n123" v-fit="15">123</span><span class="t" v-fit="166">miskovice_graves_depth</span><b><i class="arr"></i></b></div><div class="combo eb">ε</div></div>
          <div class="fr"><label><span class="t" v-fit="49">Symbol</span></label><div class="combo chg"><i class="pt"></i><span class="t" v-fit="60">Change...</span></div></div>
          <div class="fr fmt"><label><span class="t" v-fit="97">Legend format</span></label><div class="inp lf"><span class="t" v-fit="57">%1 - %2</span></div><div class="inp pr"><span class="t" v-fit="73">Precision 0</span><b class="spin"><i class="upa"></i><i class="arr sm"></i></b></div><span class="cb e"></span><span class="t" v-fit="30">Trim</span></div>
          <div class="fr"><label><span class="t" v-fit="51">Method</span></label><div class="combo mt"><span class="t" v-fit="36">Color</span><i class="arr"></i></div></div>
          <div class="fr ramp"><label><span class="t" v-fit="73">Color ramp</span></label><div class="inp rb"><div></div></div><div class="combo rd"><i class="arr sm"></i></div></div>
          <div class="tabs"><span class="tab a"><span class="t" v-fit="49">Classes</span></span><span class="tab"><span class="t" v-fit="70">Histogram</span></span><span class="rest"></span></div>
          <div class="table">
            <div class="th"><span><span class="t" v-fit="49">Symbol</span><i class="upa"></i></span><span><span class="t" v-fit="44">Values</span></span><span><span class="t" v-fit="48">Legend</span></span></div>
            <div v-for="c in classes" :key="c[0]" class="tr"><span class="c"><span class="cb"><svg viewBox="0 0 13 13"><path d="M3 6l2.600 4L10 2.500" /></svg></span><i class="cd" :style="{ background: c[0] }"></i></span><span><span class="t" v-fit="c[2]">{{ c[1] }}</span></span><span><span class="t" v-fit="c[4]">{{ c[3] }}</span></span></div>
            <svg class="cursor" viewBox="0 0 14 18"><path d="M1 0v14l3.500-3 3 6 2-1-2.500-5.500L12 10z" fill="#111" stroke="#fff" stroke-width=".8" /></svg>
          </div>
          <div class="mode"><span class="t" v-fit="37">Mode</span><div class="combo ei"><span class="t" v-fit="91">Equal Interval</span><i class="arr"></i></div><span class="t cl" v-fit="49">Classes</span><div class="inp five"><span class="t">5</span><b class="spin"><i class="upa"></i><i class="arr sm"></i></b></div></div>
          <div class="sym"><i class="big"></i><div class="clip"><span class="cb e"></span><span class="t" v-fit="166">Symmetric Classification</span></div><div class="edge"><em></em><span><i class="upa"></i></span></div></div>
          <div class="btns"><div class="combo cf"><span class="t" v-fit="51">Classify</span></div><div class="combo sq"><svg viewBox="0 0 16 14"><path d="M6 1h4v4h5v4h-5v4H6V9H1V5h5z" fill="#e6efe6" stroke="#567a60" /><path d="M8 3v8M3 7h10" stroke="#567a60" /></svg></div><div class="combo sq"><svg viewBox="0 0 16 14"><path d="M1.500 4.500h13v5h-13z" fill="#f7c9c2" stroke="#cf5a4c" /><path d="M3.500 7h9" stroke="#e08074" stroke-width="1.500" /></svg></div><div class="combo da"><span class="t" v-fit="65">Delete All</span></div><div class="combo ad"><span class="t" v-fit="64">Advanced</span><i class="arr sm"></i></div></div>
          <div class="link"><span class="cb"><svg viewBox="0 0 13 13"><path d="M3 6l2.600 4L10 2.500" /></svg></span><span class="t" v-fit="140">Link class boundaries</span></div>
          <div class="lr"><i class="big"></i><span class="t" v-fit="109">Layer Rendering</span></div>
          <div class="foot">
            <div class="combo"><svg viewBox="0 0 14 14"><path d="M.500.500h13v13H.500z" fill="#f3eeee" stroke="#888" /><circle cx="7" cy="7.500" r="3.800" fill="none" stroke="#c33" stroke-width="1.800" stroke-dasharray="3 1" /><path d="M4 5l6 5M10 5l-6 5" stroke="#b55" /></svg><span class="t" v-fit="30">Help</span></div>
            <div class="combo st"><span class="t" v-fit="32">Style</span><i class="arr sm"></i></div>
            <div class="combo ap"><svg viewBox="0 0 14 14"><path d="M0 8l3-2 2 3 6-9 3 0-8 14H5z" fill="#7e8277" stroke="#55584f" stroke-width=".7" /></svg><span class="t" v-fit="37">Apply</span></div>
            <div class="combo"><svg viewBox="0 0 14 14"><circle cx="7" cy="7" r="6.500" fill="#fff" stroke="#a44" /><circle cx="7" cy="7" r="5.200" fill="#e8301c" /></svg><span class="t" v-fit="45"><u>C</u>ancel</span></div>
            <div class="combo"><svg viewBox="0 0 14 14"><path d="M0 9l6-6v3h3V0h5v7q0 4-4 4H6v3z" fill="#6b6e60" stroke="#4b4e43" stroke-width=".7" /></svg><span class="t" v-fit="21"><u>O</u>K</span></div>
          </div>
        </div>
      </div>
    </div>
  </div>
</template>

<style>
html, body { margin: 0; background: #a8a7a9; overflow: hidden; }
</style>
<style scoped>
.app { position: relative; width: 1919px; height: 1074px; overflow: hidden; display: flex; flex-direction: column; background: #a7a6a8; color: #111; font: 14px/18px "Noto Sans", sans-serif; }
.app * { box-sizing: border-box; }
.t { display: inline-block; flex: none; white-space: pre; transform-origin: 0 50%; }
u { text-underline-offset: 2px; text-decoration-thickness: 1px; }
svg { flex: none; display: block; overflow: visible; }
i { flex: none; display: block; }
.title { flex: none; height: 29px; background: #252525; color: #c6c6c6; font-weight: 600; display: flex; align-items: center; padding: 0 0 1px 899px; }
.title .x { margin-left: auto; margin-right: 11px; font-size: 11px; }
.menu { flex: none; height: 22px; display: flex; align-items: center; border-top: 1px solid #b5b4b6; border-bottom: 1px solid #999; padding-bottom: 2px; }
.cell { flex: none; display: flex; }
.tools { flex: none; height: 35px; display: flex; align-items: center; background: linear-gradient(#b1b0b2, #a09fa1); border-bottom: 1px solid #868587; border-top: 1px solid #b5b4b6; padding-bottom: 3px; }
.tool { flex: none; width: 24px; height: 21px; filter: brightness(.7); }
.tool svg { width: 24px; height: 21px; }
.tool.on { position: relative; }
.tool.on::before { content: ""; position: absolute; left: -4px; top: -3px; width: 32px; height: 27px; background: #cfd3d4; border: 1px solid #9b9c9d; border-radius: 2px; }
.tool.on svg { position: relative; }
.arr { width: 11px; height: 5px; background: #454545; clip-path: polygon(10% 0, 90% 0, 50% 100%); }
.arr.sm { width: 9px; }
.arr.faded { background: #868587; }
.upa { width: 8px; height: 4px; background: #555; clip-path: polygon(50% 0, 100% 100%, 0 100%); }
.right { width: 4px; height: 8px; background: #3f3f3f; clip-path: polygon(0 0, 100% 50%, 0 100%); }
.grip { width: 5px; height: 16px; background: radial-gradient(circle, #858486 .8px, transparent 1px) 0 0/2.500px 3px; }
.sep { width: 1px; height: 14px; background: #969597; }
.tools .sep { height: 26px; background: #bbb; }
.main { flex: none; height: 929px; display: flex; }
.left { width: 449px; display: flex; flex-direction: column; }
.phead { height: 18px; flex: none; display: flex; align-items: center; padding: 0 1px 0 3px; gap: 2px; }
.pb { width: 12px; height: 10px; }
.phead .pb:nth-child(2) { margin-left: auto; }
.ptools { flex: none; height: 28px; display: flex; align-items: center; padding-bottom: 1px; }
.si { width: 16px; height: 14px; filter: brightness(.7); fill: none; }
.tree { background: #b0b0b0; border: 1px solid #858585; border-left: 0; display: flex; overflow: hidden; }
.rows { flex: 1; padding-top: .5px; min-width: 0; }
.browser { flex: none; height: 462px; }
.row { height: 18.880px; display: flex; align-items: center; color: #101010; }
.tw { width: 23px; flex: none; display: flex; justify-content: center; padding-right: 4px; }
.ni { width: 16px; height: 13px; margin-right: 6px; filter: brightness(.72); }
.child .tw { width: 45px; }
.child .ni, .ni.nx { width: 13px; height: 12px; margin-right: 7px; }
.sel { background: #165b95; width: 263px; color: #b7bfc9; }
.full { background: #165b95; color: #b7bfc9; }
.full .t { text-decoration: underline; text-underline-offset: 2px; }
.vsb { width: 14px; border-left: 1px solid #8b8b8b; background: #a9a9a9; }
.vsb span { height: 12px; display: flex; align-items: center; justify-content: center; border-bottom: 1px solid #8b8b8b; background: #b0b0b0; }
.split { flex: none; height: 6px; }
.lay { height: 20px; }
.lt { height: 26px; padding-bottom: 0; }
.layers { flex: 1; font-weight: 700; }
.cb { flex: none; width: 13px; height: 13px; border: 1px solid #888; background: #b4b4b4; border-radius: 1px; }
.cb svg { width: 12px; height: 12px; fill: none; stroke: #000; stroke-width: 2; }
.layers .cb { margin-right: 9px; }
.map { margin-left: 6px; width: 991px; height: 929px; border: 1px solid #858585; border-top: 0; background: #a7a7a8; overflow: hidden; }
.ident { margin-left: 6px; flex: 1; display: flex; flex-direction: column; }
.ident .phead { padding: 0 1px 0 4px; gap: 3px; }
.ident .ptools { margin-left: -2px; }
.results { flex: none; height: 821px; border: 1px solid #858585; background: #b0b0b0; }
.rh { height: 22px; display: flex; align-items: center; border-bottom: 1px solid #858585; background: linear-gradient(#b1b1b1, #a5a5a6); }
.rh > span { padding-left: 3px; display: flex; height: 21px; align-items: center; }
.rh > .c1 { width: 255px; padding-left: 2px; border-right: 1px solid #8b8b8b; }
.opt { display: flex; align-items: center; padding-left: 5px; height: 24px; }
.o1 { margin-top: 5px; }
.o2 { margin-top: 5px; }
.off { color: #848384; }
.combo { flex: none; height: 24px; border: 1px solid #b0afb1; border-radius: 3px; background: linear-gradient(#fff, #f2f2f3); display: flex; align-items: center; box-shadow: 0 1px 0 #d9d8da; }
.combo.dim { background: linear-gradient(#afafaf, #a6a5a7); border-color: #7d7c7e; box-shadow: none; }
.dim.m { margin-left: 5px; width: 180px; padding: 0 6px 0 4px; }
.combo > .arr:last-child { margin-left: auto; }
.opt .cb { margin-left: 102px; margin-right: 4px; background: #aeaeae; }
.dim.v { margin-left: 6px; width: 78px; padding: 0 6px 0 4px; border-color: #8c8b8d; }
.dim.h { margin-left: 292px; width: 45px; justify-content: center; }
.status { flex: none; height: 24px; display: flex; align-items: center; padding: 8px 0 0 4px; }
.status .t { font-size: 13px; }
.loc { flex: none; width: 269px; height: 24px; border: 1px solid #777; border-radius: 2px; background: #afafaf; display: flex; align-items: center; padding-left: 7px; color: #3f3f3f; gap: 8px; align-self: flex-start; margin-top: -4px; }
.status .loc .t { font-size: 14px; }
.loc svg { width: 13px; height: 13px; fill: none; stroke: #444; stroke-width: 1.200; }
.loc + .t { margin-left: 732px; }
.fld { flex: none; height: 24px; border: 1px solid #777; border-radius: 2px; background: #afafaf; display: flex; align-items: center; padding-left: 3px; margin-top: 2px; }
.fld .t { margin-top: -3px; }
.fld b { margin-left: auto; height: 22px; width: 20px; border-left: 1px solid #777; display: flex; align-items: center; justify-content: center; padding-bottom: 3px; background: #a9a9a9; }
.spin { flex-direction: column; gap: 5px; }
.fld b.spin { width: 14px; }
.co { width: 136px; margin-left: 3px; padding-left: 8px; }
.ext { width: 18px; height: 16px; margin: 0 13px 0 4px; }
.sc { width: 101px; margin-left: 4px; }
.lock { width: 12px; height: 15px; margin: 0 9px 0 12px; }
.mg { width: 92px; margin: 2px 9px 0 4px; }
.ro { width: 96px; margin: 2px 8px 0 9px; padding-left: 4px; }
.status .cb { margin-right: 5px; }
.gl { width: 13px; height: 12px; margin: 0 4px 0 16px; }
.msg { width: 16px; height: 14px; margin-left: 22px; }
.dialog { position: absolute; left: 288px; top: 196px; width: 1343px; height: 688px; display: flex; flex-direction: column; background: #efeef0; border-radius: 4px 4px 0 0; box-shadow: 0 4px 20px 2px rgba(0, 0, 0, .55); }
.dt { flex: none; height: 29px; border-radius: 4px 4px 0 0; background: #363537; border-top: 1px solid #4a494b; color: #f2f2f2; font-weight: 600; display: flex; align-items: center; padding: 0 11px 0 508px; }
.dt .x { margin-left: auto; font-size: 12px; }
.db { flex: 1; display: flex; min-height: 0; }
.side { width: 150px; flex: none; display: flex; flex-direction: column; background: #5b5a5b; }
.search { flex: none; height: 24px; background: #fff; border: 1px solid #bbb; padding: 5px 8px; }
.search svg { width: 12px; height: 12px; fill: none; stroke: #888; stroke-width: 1.200; }
.sl { flex: 1; display: flex; min-height: 0; overflow: hidden; }
.pages { width: 136px; padding-top: 7px; overflow: hidden; }
.page { height: 32.400px; display: flex; align-items: center; padding-left: 5px; gap: 8px; color: #fff; font-weight: 500; font-size: 13.500px; }
.page svg { width: 24px; height: 22px; fill: none; }
.two { height: 41.800px; }
.pl { display: flex; flex-direction: column; align-items: flex-start; line-height: 17px; }
.cur { background: #f3f2f4; color: #222; padding-left: 7px; gap: 9px; font-weight: 400; }
.sb { width: 14px; margin-top: 6px; display: flex; flex-direction: column; background: linear-gradient(90deg, #fff, #f6f6f6); }
.sb span { height: 12px; background: #fff; display: flex; align-items: center; justify-content: center; border-bottom: 1px solid #ccc; }
.sb em { height: 33px; margin-top: auto; background: #e2e1e3; border: 1px solid #c8c8c8; }
.form { flex: 1; padding: 3px 3px 0 4px; display: flex; flex-direction: column; min-width: 0; }
.grad { padding: 0 5px 0 7px; }
.grad svg { width: 14px; height: 13px; margin-right: 4px; }
.fr { flex: none; display: flex; height: 24px; margin-top: 5.800px; align-items: center; }
label { width: 106px; flex: none; display: flex; }
.inp { height: 24px; border: 1px solid #b0afb1; border-radius: 3px; background: #fff; display: flex; align-items: center; box-shadow: 0 1px 0 #d9d8da; padding-left: 3px; }
.inp b { margin-left: auto; height: 22px; width: 20px; border-left: 1px solid #b0afb1; display: flex; align-items: center; justify-content: center; background: #f8f8f8; border-radius: 0 3px 3px 0; }
.inp b.spin { width: 14px; height: 20px; }
.col { flex: 1; }
.n123 { font-size: 9px; font-weight: 600; margin-top: -5px; color: #555; }
.n123 + .t { margin-left: 3px; }
.eb { width: 23px; margin-left: 7px; justify-content: center; font: 18px "Liberation Serif", serif; color: #333; }
.chg { flex: 1; padding-left: 504px; gap: 4px; }
.pt { width: 9px; height: 8px; border-radius: 50%; background: #9fae3f; border: 1px solid #4c5430; }
.fmt { padding-right: 6.500px; }
.lf { flex: 1; }
.pr { width: 108px; height: 22px; margin-left: 6px; padding-left: 4px; }
.form .cb { background: #fff; border-color: #a9a8aa; }
.pr + .cb { margin: 0 6px 0 7px; }
.mt { flex: 1; padding: 0 5px; }
.rb { flex: 1; padding: 0 4px; }
.rb div { flex: 1; height: 14px; background: linear-gradient(90deg, #f93b24, #fdae61 25%, #fdf5b6 50%, #a2cd9c 73%, #1f74c4); }
.rd { width: 11px; margin-left: 1px; }
.tabs { flex: none; height: 26px; margin-top: 8px; display: flex; align-items: flex-end; }
.tab { height: 25px; border: 1px solid #b4b3b5; background: #ebeaec; display: flex; align-items: center; padding-left: 11px; width: 95px; border-left: 0; }
.tab.a { width: 76px; height: 26px; background: #fff; border: 1px solid #b4b3b5; border-bottom: 0; border-radius: 3px 3px 0 0; }
.rest { flex: 1; border-bottom: 1px solid #b4b3b5; }
.table { position: relative; flex: none; height: 263px; margin-top: 9px; border: 1px solid #b0afb1; background: #fff; }
.th { height: 20px; display: flex; background: linear-gradient(#fdfdfd, #ebeaec); border-bottom: 1px solid #bdbcbe; }
.th > span, .tr > span { display: flex; align-items: center; width: 107px; padding-left: 2px; padding-top: 1px; }
.th > span { border-right: 1px solid #c3c2c4; }
.th > span:first-child { width: 82px; padding: 1px 4px 0 2px; justify-content: space-between; }
.th > span:last-child { border: 0; }
.tr { height: 17px; display: flex; }
.tr > .c { width: 83px; padding-left: 3px; }
.tr > span:last-child { width: 300px; }
.cd { width: 9px; height: 8px; border: 1px solid rgba(40, 40, 40, .6); border-radius: 50%; margin-left: 10px; }
.cursor { position: absolute; left: 23px; top: 115px; width: 13px; height: 18px; }
.mode { flex: none; height: 24px; margin-top: 5px; display: flex; align-items: center; }
.ei { width: 181px; margin-left: 6px; padding: 0 5px 0 4px; }
.cl { margin-left: auto; }
.five { width: 54px; height: 22px; margin-left: 7px; padding-left: 4px; }
.sym { flex: none; height: 28px; margin-top: 6px; display: grid; grid-template-columns: 15px 1fr; grid-template-rows: 9px 13px; }
.big { width: 7px; height: 11px; background: #2c2c2c; clip-path: polygon(0 0, 100% 50%, 0 100%); margin-left: 5px; }
.sym .big { margin-top: 4px; }
.clip { overflow: hidden; display: flex; gap: 8px; padding-left: 5px; font-weight: 700; align-items: flex-start; }
.clip .cb { margin-top: 2px; border-color: #ccc; }
.edge { grid-column: 2; border-top: 1px solid #aaa9ab; border-left: 1px dotted #aaa; width: 1162px; border-radius: 2px 2px 0 0; display: flex; justify-content: space-between; }
.edge em { margin: 4px 0 0 10px; width: 240px; height: 1px; background: repeating-linear-gradient(90deg, #c9c8ca 0 6px, transparent 6px 10px); }
.edge span { width: 14px; border: 1px solid #b4b3b5; border-width: 0 1px; background: #fff; display: flex; align-items: center; justify-content: center; }
.edge .upa { background: #ccc; }
.btns { flex: none; height: 25px; display: flex; align-items: center; margin-top: -1px; }
.cf { width: 80px; justify-content: center; height: 25px; border-color: #5c7ba6; background: linear-gradient(#fdfdfe, #dfe8f4); }
.sq { width: 28px; height: 22px; margin-left: 6px; justify-content: center; }
.sq svg { width: 15px; height: 13px; }
.da { width: 80px; margin-left: 6px; justify-content: center; }
.ad { width: 86px; margin-left: auto; padding: 0 2px 0 4px; }
.link { flex: none; height: 18px; margin-top: 8px; display: flex; align-items: center; gap: 6px; }
.lr { flex: none; height: 18px; margin-top: 16px; display: flex; align-items: center; gap: 10px; font-weight: 700; }
.foot { flex: none; display: flex; margin-top: 4px; gap: 6.300px; }
.foot .combo { width: 79.500px; justify-content: center; gap: 2px; }
.foot svg { width: 14px; height: 13px; }
.foot .st { padding: 0 3px 0 16px; justify-content: flex-start; }
.foot .ap { margin-left: auto; }
</style>
